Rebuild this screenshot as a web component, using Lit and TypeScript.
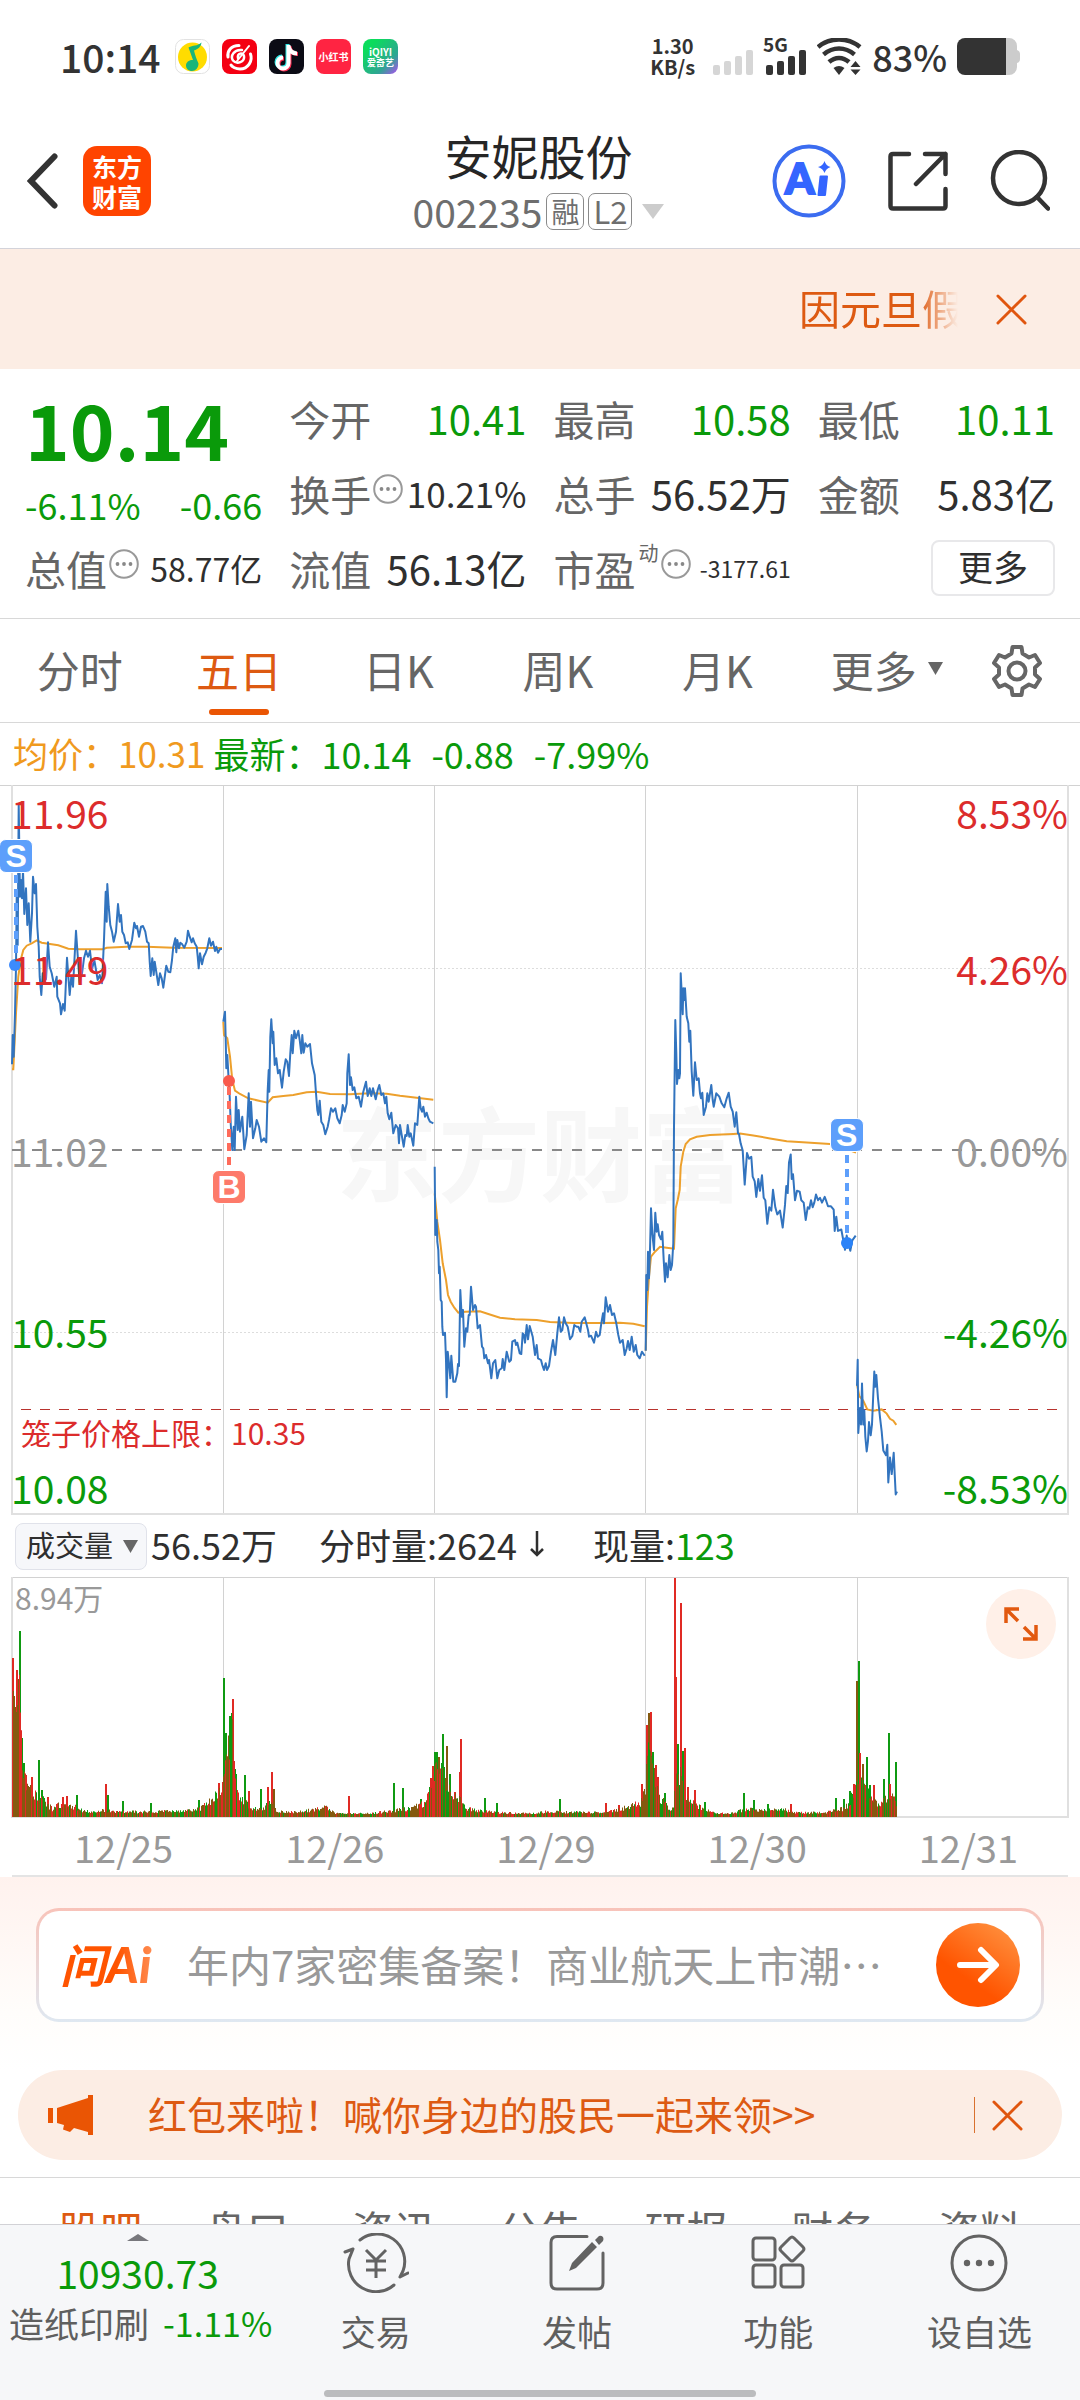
import { LitElement, html, svg, css } from "lit";
import { customElement, state } from "lit/decorators.js";
import { classMap } from "lit/directives/class-map.js";

type Trace = { ox: number; oy: number; sy: number; pts: string };

/* Intraday traces: three horizontal samples per chart unit, sy vertical samples per unit. */
const PRICE: Trace[][] = [
  [{ ox: 0, oy: -5, sy: 3, pts: "36,853 38,765 41,830 45,700 48,560 50,350 53,495 56,75 60,350 63,300 66,355 69,270 73,402 78,325 82,435 86,370 91,485 96,400 99,290 104,340 108,312 112,440 116,500 119,590 124,645 128,580 132,600 138,598 144,487 149,560 155,580 163,620 170,590 172,650 180,670 183,703 189,672 194,692 198,600 201,533 209,645 214,590 219,620 228,452 234,540 239,610 246,580 252,535 258,512 264,530 270,512 276,567 283,540 288,570 293,600 299,585 306,610 312,480 317,335 320,425 322,312 326,380 331,435 336,455 341,485 348,455 354,372 359,425 363,405 367,455 372,465 377,490 383,487 388,507 396,480 403,428 408,445 411,438 417,470 423,440 429,438 436,455 441,485 446,490 449,545 452,588 457,535 461,585 464,545 471,590 475,615 480,580 485,595 490,623 495,585 499,557 505,575 511,577 516,540 520,500 526,475 529,517 532,480 537,505 541,488 546,492 553,503 560,485 564,452 569,470 575,487 579,475 584,490 590,500 593,530 596,565 600,520 606,553 611,530 617,518 622,505 628,475 633,497 639,485 645,513 649,500 654,518 660,507 666,507" }],
  [{ ox: 0, oy: -5, sy: 3, pts: "670,725 675,695 677,780 679,865 682,825 685,880 689,950 692,1030 697,1110 701,1040 704,1110 708,950 713,1050 716,990 720,1055 727,1010 733,1108 740,1065 746,940 750,1040 753,965 759,1075 766,1045 770,1020 777,1040 784,1085 792,1075 799,1087 803,930 806,870 808,935 811,770 814,718 818,790 820,755 824,855 829,835 834,880 839,870 846,923 851,875 857,838 862,845 867,888 871,820 875,765 878,820 883,752 888,775 895,752 899,780 904,820 907,765 911,818 916,790 922,800 930,792 936,850 944,885 948,940 952,990 955,1005 959,962 964,1025 970,1035 976,1063 983,1040 987,1020 993,985 999,995 1006,985 1012,1015 1019,1030 1025,1005 1028,975 1034,995 1040,970 1042,880 1046,823 1050,915 1053,892 1058,930 1063,922 1069,955 1076,950 1083,980 1090,935 1098,905 1103,948 1109,925 1114,948 1119,925 1127,958 1133,930 1138,915 1144,945 1150,940 1155,970 1159,950 1163,1000 1168,1018 1174,998 1180,1060 1187,1035 1194,1045 1197,1090 1200,1035 1205,1065 1211,1100 1216,1065 1220,1068 1223,1035 1228,1070 1232,1060 1240,1097 1245,1030 1252,1035 1258,950 1262,985 1266,995 1270,980 1275,1010 1280,998 1285,1015 1290,1025 1300,1030" }],
  [{ ox: 400, oy: 175, sy: 3, pts: "104,620 106,825 110,780 112,845 115,870 117,940 119,920 122,1020 125,1025 127,1100 129,1125 135,1118 138,1200 140,1312 143,1175 147,1210 151,1255 154,1187 160,1265 166,1265 172,1240 174,1212 177,1218 181,990 185,1070 189,1050 193,1160 198,1105 202,1115 206,1065 209,1065 213,980 219,1050 225,1035 228,1040 233,1105 240,1095 246,1160 250,1165 253,1195 258,1185 264,1210 267,1200 271,1230 274,1255 279,1210 286,1200 292,1255 298,1230 305,1225 308,1197 313,1230 320,1175 328,1205 333,1200 337,1145 345,1140 348,1155 352,1148 359,1180 364,1182 368,1120 372,1125 375,1148 380,1095 384,1138 389,1098 398,1130 405,1185 410,1155 414,1195 423,1200 427,1215 432,1230 437,1210 441,1230 447,1218 453,1175 459,1140 466,1185 472,1120 477,1072 482,1115 487,1110 492,1072 497,1090 503,1100 510,1138 517,1128 523,1095 530,1100 535,1100 541,1115 545,1085 554,1072 560,1095 564,1110 567,1130 573,1127 582,1148 588,1115 593,1130 599,1125 604,1090 609,1060 612,1090 617,1012 624,1055 630,1035 636,1065 642,1060 649,1090 655,1125 660,1148 668,1140 674,1185 680,1165 684,1143 689,1170 695,1130 701,1175 707,1155 712,1185 719,1195 726,1175 734,1187" }],
  [
    { ox: 400, oy: 175, sy: 3, pts: "737,1172 739,945 742,990 744,875 747,955 750,870 753,745 757,820 762,870 766,758 770,815 773,793 777,825 783,838 787,815 791,900 795,965 798,910 803,952 808,885 812,930 816,915 820,850 822,500 826,180 829,280 831,372 835,330 838,355 840,340 842,40 845,100 848,163 850,85 853,120 855,85 860,170 865,190 868,245 871,212 875,335 880,407 885,307 890,360 896,355 900,400 903,415 907,398 911,465 918,440 922,400 926,425 934,375 938,420 941,440 949,400 958,410 965,430 973,442 980,415 986,398 992,440 998,455 1004,500 1009,457 1014,520" },
    { ox: 630, oy: -5, sy: 2.118, pts: "327,750 332,770 338,785 344,857 351,790 357,802 364,798 368,840 374,850 379,883 385,845 390,870 396,837 401,885 406,890 412,940 418,905 424,912 429,868 436,905 442,920 450,912 458,948 465,900 469,860 473,875 477,810 482,793 485,845 489,835 495,890 501,870 509,872 514,890 521,895 527,932 533,905 538,908 543,890 548,905 553,895 558,878 564,890 570,885 576,895 584,883 589,892 594,903 603,903 611,910 614,955 619,925 624,955 634,952 640,975 645,995 650,965 655,980 661,997 667,975 677,965" },
  ],
  [{ ox: 630, oy: -5, sy: 2.118, pts: "681,1283 683,1228 685,1383 690,1330 693,1365 696,1278 700,1365 703,1335 706,1390 710,1422 714,1400 717,1360 722,1388 726,1365 730,1300 733,1253 736,1285 739,1260 744,1310 750,1350 755,1380 760,1420 768,1430 772,1408 775,1488 780,1435 785,1470 791,1425 794,1470 797,1513 801,1507" }],
];

const AVERAGE: Trace[][] = [
  [{ ox: 0, oy: -5, sy: 3, pts: "36,868 40,868 48,700 55,590 62,540 70,510 80,497 95,490 110,481 125,488 150,492 175,496 205,506 240,508 308,508 320,503 380,500 440,500 520,503 666,504" }],
  [{ ox: 0, oy: -5, sy: 3, pts: "670,725 672,765 682,775 690,830 697,900 705,932 720,942 745,955 780,963 803,968 818,952 850,948 880,945 920,937 950,935 990,942 1050,943 1110,940 1160,941 1200,947 1250,953 1300,959" }],
  [{ ox: 400, oy: 175, sy: 3, pts: "104,700 112,785 120,840 128,910 138,960 144,1005 152,1025 163,1043 175,1058 195,1055 240,1054 265,1062 300,1073 345,1078 410,1080 450,1086 520,1089 600,1089 660,1088 700,1091 734,1099" }],
  [
    { ox: 400, oy: 175, sy: 3, pts: "737,1172 741,1040 747,950 753,890 765,875 780,860 800,863 822,866 827,745 833,720 839,690 842,620 850,575 857,552 870,538 890,530 930,525 1000,522" },
    { ox: 630, oy: -5, sy: 2.118, pts: "330,749 370,753 420,759 470,765 530,768 600,771 650,782 678,789" },
  ],
  [{ ox: 630, oy: -5, sy: 2.118, pts: "681,1280 688,1305 700,1315 712,1333 730,1336 755,1333 770,1342 780,1353 790,1357 799,1366" }],
];

const plot = (parts: Trace[]) =>
  parts
    .flatMap((t) =>
      t.pts.split(" ").map((p) => {
        const [x, y] = p.split(",").map(Number);
        return `${(t.ox + x / 3).toFixed(1)},${(t.oy + y / t.sy).toFixed(1)}`;
      }),
    )
    .join(" ");

/* Typical bar height along the session, as [x, height] knots. */
const VOLUME_BASE: number[][] = [
  [12, 130], [15, 110], [18, 140], [20, 130], [22, 72], [26, 42], [32, 28], [40, 26], [46, 16], [52, 9], [60, 15], [74, 12], [80, 8], [90, 6], [105, 8], [115, 6], [150, 6],
  [185, 7], [200, 10], [210, 18], [222, 34], [225, 55], [228, 75], [232, 98], [235, 44], [240, 22], [250, 11], [262, 8], [270, 20], [276, 6], [300, 6], [325, 11], [335, 4],
  [370, 4], [390, 7], [410, 10], [425, 16], [431, 34], [434, 58], [441, 58], [446, 42], [452, 24], [458, 22], [465, 10], [480, 7], [500, 5], [530, 4], [545, 6], [600, 5], [620, 9],
  [640, 16], [645, 30], [647, 75], [652, 60], [658, 25], [664, 18], [668, 8], [673, 10], [675, 42], [682, 50], [686, 22], [695, 14], [705, 9], [715, 4], [730, 4], [745, 9],
  [765, 8], [785, 8], [795, 5], [825, 5], [835, 8], [845, 10], [850, 20], [856, 33], [859, 58], [862, 45], [868, 28], [875, 16], [880, 12], [885, 22], [895, 22], [897, 8],
];
const SPIKES: [number, number, string][] = [
  [12, 159, "r"], [13, 121, "m"], [16, 147, "r"], [17, 138, "m"], [19, 186, "g"], [21, 79, "g"], [23, 54, "g"], [25, 42, "r"], [31, 40, "r"], [38, 57, "g"], [41, 27, "g"], [47, 20, "r"],
  [62, 20, "r"], [66, 21, "r"], [76, 22, "g"], [105, 33, "r"], [107, 22, "g"], [122, 16, "g"], [150, 14, "g"], [198, 17, "g"], [218, 34, "r"], [223, 139, "g"], [225, 84, "g"],
  [229, 101, "g"], [231, 104, "g"], [232, 118, "r"], [234, 48, "g"], [244, 42, "g"], [248, 26, "r"], [260, 28, "g"], [267, 30, "r"], [271, 45, "r"], [273, 28, "m"], [348, 21, "r"],
  [393, 34, "g"], [402, 29, "g"], [420, 18, "g"], [430, 39, "r"], [432, 51, "r"], [434, 65, "g"], [436, 65, "g"], [438, 60, "m"], [442, 83, "g"], [446, 71, "m"], [449, 43, "g"],
  [454, 25, "r"], [459, 45, "r"], [460, 78, "r"], [484, 19, "g"], [496, 14, "g"], [559, 18, "g"], [605, 14, "r"], [618, 12, "r"], [641, 33, "r"], [646, 92, "r"], [648, 104, "m"],
  [650, 105, "r"], [652, 65, "g"], [655, 52, "r"], [657, 40, "r"], [664, 24, "g"], [674, 239, "r"], [675, 140, "r"], [677, 73, "g"], [680, 214, "r"], [682, 66, "g"], [684, 69, "r"],
  [687, 30, "r"], [694, 27, "r"], [704, 15, "g"], [743, 24, "g"], [753, 17, "g"], [767, 13, "g"], [790, 13, "r"], [835, 19, "g"], [843, 18, "g"], [849, 26, "g"], [853, 33, "r"],
  [856, 136, "m"], [858, 156, "g"], [859, 64, "r"], [862, 53, "m"], [866, 60, "g"], [869, 32, "g"], [873, 32, "r"], [883, 38, "g"], [888, 84, "g"], [889, 33, "r"], [895, 55, "g"],
];

const volumeBars = () => {
  const paths: Record<string, string> = { r: "", g: "", m: "" };
  let seed = 17;
  const rnd = () => (seed = (seed * 16807) % 2147483647) / 2147483647;
  let k = 0;
  for (let x = 12; x < 897; x++) {
    while (VOLUME_BASE[k + 1][0] <= x && k < VOLUME_BASE.length - 2) k++;
    const [x0, h0] = VOLUME_BASE[k];
    const [x1, h1] = VOLUME_BASE[k + 1];
    const base = h0 + ((h1 - h0) * (x - x0)) / (x1 - x0);
    const h = Math.max(3, base * (0.6 + 0.5 * rnd()));
    const c = "rgmm"[Math.floor(rnd() * 4)];
    paths[c] += `M${x} 240h1v-${h.toFixed(1)}h-1z`;
  }
  let spikes = "";
  for (const [x, h, c] of SPIKES) {
    if (c === "m") spikes += `M${x} 240h2v-${h}h-2z`;
    else paths[c] += `M${x} 240h2v-${h}h-2z`;
  }
  return svg`<path class="vol-mix" d=${spikes}></path><path class="vol-down" d=${paths.g}></path><path class="vol-up" d=${paths.r}></path><path class="vol-mix" d=${paths.m}></path>`;
};

const more = html`<svg class="dots" viewBox="0 0 30 30" aria-hidden="true">
  <circle cx="15" cy="15" r="13.8" fill="none" stroke="#999" stroke-width="2"></circle>
  <g fill="#888"><circle cx="8.5" cy="15" r="1.9"></circle><circle cx="15" cy="15" r="1.9"></circle><circle cx="21.5" cy="15" r="1.9"></circle></g>
</svg>`;

const cross = html`<svg class="cross" viewBox="0 0 32 32" aria-hidden="true">
  <path d="M2 2L30 30M30 2L2 30" stroke="#e0560f" stroke-width="3" stroke-linecap="round"></path>
</svg>`;

@customElement("app-root")
export class AppRoot extends LitElement {
  @state() private period = "五日";

  static styles = css`
    :host { display: flex; flex-direction: column; height: 100vh; background: #fff; color: #2f2f2f; font-family: "Noto Sans CJK SC", "Noto Sans", sans-serif; overflow: hidden; }
    * { box-sizing: border-box; }
    svg { display: block; flex: none; }
    button, select, input { font: inherit; color: inherit; background: none; border: 0; padding: 0; margin: 0; border-radius: 0; cursor: pointer; }
    a { color: inherit; text-decoration: none; }
    .green { color: #0a9a0a; }
    .red { color: #dc2c2c; }
    .grey { color: #999; }

    .status { flex: none; display: flex; align-items: center; justify-content: space-between; height: 112px; padding: 0 60px; color: #333; }
    .status-side { display: flex; align-items: center; gap: 12px; }
    .status-right { gap: 10px; }
    .clock { font-size: 39px; line-height: 40px; font-weight: 500; margin-right: 2px; }
    .rate { font-size: 20px; line-height: 21px; font-weight: 700; text-align: center; margin-right: 8px; }
    .battery-text { font-size: 36px; line-height: 40px; font-weight: 500; }

    .header { flex: none; display: grid; grid-template-columns: 1fr auto 1fr; align-items: center; height: 137px; padding: 2px 30px 0 27px; border-bottom: 1px solid #d3d3da; }
    .header-side { display: flex; align-items: center; gap: 24px; }
    .header-right { justify-content: flex-end; gap: 42px; }
    .logo { display: grid; place-content: center; width: 68px; height: 70px; border-radius: 14px; background: #ff4400; color: #fff; font-weight: 700; font-size: 25px; line-height: 30px; text-align: center; }
    .title { display: flex; flex-direction: column; align-items: center; }
    .name { margin: 0; font-size: 47px; line-height: 60px; font-weight: 400; color: #262626; }
    .code { display: flex; align-items: center; gap: 4px; font-size: 39px; line-height: 52px; color: #6e6e6e; }
    .tag { display: grid; place-content: center; height: 37px; padding: 0 4px; border: 1px solid #8a8a8a; border-radius: 7px; font-size: 28px; line-height: 32px; }
    .tag-level { font-size: 31px; }
    .code-arrow { margin-left: 6px; }

    .notice { flex: none; display: flex; align-items: center; justify-content: flex-end; gap: 38px; height: 120px; padding: 0 53px 0 28px; background: #fcede4; color: #dd5a12; }
    .notice-text { width: 159px; overflow: hidden; white-space: nowrap; padding-bottom: 4px; font-size: 41px; line-height: 56px; -webkit-mask-image: linear-gradient(90deg, #000 75%, transparent 100%); mask-image: linear-gradient(90deg, #000 75%, transparent 100%); }
    .cross { width: 31px; height: 31px; }

    main { flex: 1; min-height: 0; overflow: hidden; }
    .quote { display: grid; grid-template-columns: repeat(4, minmax(0, 1fr)); grid-auto-rows: 75px; column-gap: 27px; height: 250px; padding: 11px 25px; border-bottom: 1px solid #d8d8d8; }
    .headline { grid-row: span 2; display: flex; flex-direction: column; }
    .last { font-size: 76px; line-height: 96px; font-weight: 700; }
    .change { display: flex; justify-content: space-between; font-size: 36px; line-height: 56px; }
    .cell { display: flex; align-items: center; justify-content: space-between; line-height: 60px; white-space: nowrap; }
    .label { display: flex; align-items: center; font-size: 41px; color: #666; }
    .dots { width: 30px; height: 30px; margin: 0 0 8px 2px; }
    .sup { font-size: 20px; line-height: 22px; margin: 0 0 30px 3px; }
    .v40 { font-size: 40px; }
    .v35 { font-size: 35px; }
    .v32 { font-size: 32px; }
    .v24 { font-size: 23px; }
    .more-button { margin-left: auto; width: 124px; height: 56px; padding-bottom: 4px; border: 2px solid #e8e8ea; border-radius: 8px; font-size: 35px; line-height: 48px; }

    .periods { display: grid; grid-template-columns: repeat(5, 160fr) 180fr 82fr; height: 104px; padding-right: 22px; border-bottom: 1px solid #d8d8d8; color: #666; font-size: 43px; }
    .period { display: flex; flex-direction: column; align-items: center; line-height: 60px; padding-top: 20px; gap: 10px; }
    .period::after { content: ""; width: 60px; height: 6px; border-radius: 3px; }
    .period.active { color: #dd5a12; }
    .period.active::after { background: #ea5504; }
    .period-more { display: flex; align-items: center; justify-content: center; gap: 11px; padding-bottom: 4px; }
    .gear { display: grid; place-items: center; }

    .legend { display: flex; align-items: center; gap: 20px; height: 62px; padding: 0 13px 2px; font-size: 36px; line-height: 60px; white-space: nowrap; }
    .average { color: #f09a1e; margin-right: -12px; font-size: 35px; }

    .chart { position: relative; }
    .chart svg.plot { width: 100%; height: 730px; }
    .chart svg.volume { width: 100%; height: 242px; }
    .plot *, .volume * { vector-effect: non-scaling-stroke; }
    .grid { fill: none; stroke: #d2d2d2; stroke-width: 1; }
    .frame { fill: none; stroke: #e0e0e0; stroke-width: 2; }
    .half { fill: none; stroke: #ddd; stroke-width: 1; stroke-dasharray: 2 2; }
    .zero { fill: none; stroke: #888; stroke-width: 2; stroke-dasharray: 10 10; }
    .cage { fill: none; stroke: #b8332e; stroke-width: 1; stroke-dasharray: 10 9; }
    .avg { fill: none; stroke: #eda02c; stroke-width: 2; }
    .price { fill: none; stroke: #3274bf; stroke-width: 2; stroke-linejoin: round; }
    .vol-up { fill: #e02a24; }
    .vol-down { fill: #0f9a12; }
    .vol-mix { fill: #84590f; }
    .watermark { position: absolute; left: 50%; top: 313px; transform: translateX(-50%); font-size: 102px; line-height: 104px; font-weight: 700; color: #f7f7f7; white-space: nowrap; }
    .plot, .volume { position: relative; }
    .axis { position: absolute; font-size: 39px; line-height: 40px; }
    .axis-left { left: 11px; }
    .axis-right { right: 12px; }
    .cage-label { position: absolute; left: 21px; top: 630px; font-size: 30px; line-height: 34px; }
    .mark { position: absolute; width: 34px; height: 34px; transform: translate(-50%, -50%); border: 1px solid #fff; border-radius: 7px; color: #fff; font-size: 32px; line-height: 32px; font-weight: 700; text-align: center; font-family: "Liberation Sans", sans-serif; }
    .sell { background: #5d9ffb; }
    .buy { background: #fd7a6a; }

    .volume-bar { display: flex; align-items: center; height: 62px; padding-left: 15px; font-size: 36px; line-height: 56px; white-space: nowrap; }
    .volume-bar > span { padding-bottom: 4px; }
    .volume-bar > .picker { position: relative; display: flex; align-items: center; width: 132px; height: 47px; padding: 0; border: 1px solid #e0e2ea; border-radius: 8px; background: #f6f7fa; margin-right: 4px; }
    .picker select { appearance: none; width: 100%; height: 45px; padding: 0 0 4px 10px; font-size: 29px; line-height: 40px; }
    .picker svg { position: absolute; right: 8px; pointer-events: none; }
    .minute { margin: 0 46px 0 42px; display: flex; align-items: center; }
    .peak { position: absolute; left: 15px; top: 3px; font-size: 30px; line-height: 34px; }
    .expand { position: absolute; right: 24px; top: 12px; width: 70px; height: 70px; border-radius: 50%; background: #fff0e8; display: grid; place-items: center; }
    .dates { display: grid; grid-template-columns: repeat(5, 1fr); height: 56px; padding: 0 6px 0 18px; font-size: 38px; line-height: 56px; text-align: center; color: #999; }
    .rule { height: 2px; margin: 0 12px; background: #e4e4e4; }

    .ask { height: 193px; padding: 31px 36px; background: linear-gradient(#fff2ee, #fffdfb 70%, #fff); }
    .ask-box { display: flex; align-items: center; height: 114px; padding: 0 21px; border: 3px solid transparent; border-radius: 23px; background: linear-gradient(#fff, #fff) padding-box, linear-gradient(#f8c3b9, #dfe8f1) border-box; }
    .ask-logo { display: flex; align-items: baseline; width: 127px; font-size: 46px; line-height: 56px; font-weight: 700; font-style: italic; white-space: nowrap; color: transparent; background: linear-gradient(90deg, #ff5400 45%, #ff9a66 80%); background-clip: text; -webkit-background-clip: text; padding-bottom: 4px; }
    .ask-latin { font-family: Lato, "Liberation Sans", sans-serif; font-weight: 900; font-size: 50px; }
    .ask-input { flex: 1; min-width: 0; height: 60px; padding-bottom: 4px; font-size: 42px; outline: 0; }
    .ask-input::placeholder { color: #999; opacity: 1; }
    .go { width: 84px; height: 84px; border-radius: 50%; background: linear-gradient(35deg, #ff5400 35%, #ff8e3c 90%); display: grid; place-items: center; }

    .promo { display: flex; align-items: center; height: 90px; margin: 0 18px 17px; padding: 0 39px 0 30px; border-radius: 45px; background: #fcede4; color: #dd5a12; font-size: 39px; line-height: 60px; white-space: nowrap; }
    .promo a { flex: 1; margin-left: 54px; padding-bottom: 5px; }
    .promo-close { display: flex; align-items: center; padding-left: 17px; border-left: 1px solid #d9712f; height: 36px; }

    .sections { display: grid; grid-template-columns: repeat(7, 1fr); border-top: 1px solid #d8d8d8; padding: 21px 27px; font-size: 42px; line-height: 60px; font-weight: 400; text-align: center; color: #666; }
    .sections .current { color: #dd5a12; }

    .dock { position: relative; flex: none; display: grid; grid-template-columns: 275fr repeat(4, 201fr); height: 176px; border-top: 1px solid #d2d2d6; background: #f6f7f9; color: #5f5f5f; }
    .index { display: flex; flex-direction: column; align-items: center; padding-top: 9px; }
    .index-value { font-size: 39px; line-height: 48px; margin-top: 7px; }
    .index-name { display: flex; gap: 14px; font-size: 35px; line-height: 54px; white-space: nowrap; padding-left: 6px; }
    .index-pct { font-size: 34px; }
    .action { display: flex; flex-direction: column; align-items: center; gap: 16px; padding-top: 8px; font-size: 35px; line-height: 44px; }
    .action svg { width: 66px; height: 60px; fill: none; stroke: #636363; stroke-width: 3; stroke-linecap: round; stroke-linejoin: round; }
    .home { position: absolute; left: 30%; right: 30%; bottom: 3px; height: 7px; border-radius: 4px; background: #bbbcbe; }
  `;

  private statusBar() {
    return html`<div class="status">
      <div class="status-side">
        <span class="clock">10:14</span>
        <svg width="35" height="35" viewBox="0 0 35 35" role="img" aria-label="QQ音乐">
          <rect x=".5" y=".5" width="34" height="34" rx="8" fill="#fff" stroke="#e2e2e2"></rect>
          <circle cx="17.5" cy="18" r="14.5" fill="#ffdc00"></circle>
          <path d="M13.500 8.500C18 6 22 7.500 26.500 3.500C26 8 23 10 19 11.500C20 16 21.500 20 23.500 24.500C23.500 29 20.500 32 17 32C13.500 32 11 29.500 11 26.500C11 23 14.500 20.500 18 21z" fill="#18b57a"></path>
        </svg>
        <svg width="35" height="35" viewBox="0 0 35 35" role="img" aria-label="网易云音乐">
          <rect width="35" height="35" rx="8" fill="#f40012"></rect>
          <g fill="none" stroke="#fff" stroke-width="3" stroke-linecap="round">
            <path d="M17 6.500C9 6.500 5 12 6 18M28.500 15C31 22 26 30 18 30C14 30 10 28 9 26"></path>
            <path d="M20 11C12 10 8 17 11 21.500C15 26 23 23 22 17C21 13 15 14 16 19" stroke-width="2.500"></path>
            <path d="M27 7L15 22" stroke-width="2"></path>
          </g>
        </svg>
        <svg width="35" height="35" viewBox="0 0 35 35" role="img" aria-label="抖音">
          <rect width="35" height="35" rx="8" fill="#0b0b15"></rect>
          <g fill="none" stroke-width="4">
            <path d="M18.500 5V23A5.500 5.500 0 1 1 13 17.500M18.500 7C19.500 12 23 14 27 14" stroke="#2ee8e4"></path>
            <path d="M20.500 7V25A5.500 5.500 0 1 1 15 19.500M20.500 8C21.500 13 25 15 29 15" stroke="#fa2d52"></path>
            <path d="M19.500 6V24A5.500 5.500 0 1 1 14 18.500M19.500 7C20.500 12 24 14.500 28 14.500" stroke="#fff"></path>
          </g>
        </svg>
        <svg width="35" height="35" viewBox="0 0 35 35">
          <rect width="35" height="35" rx="8" fill="#ff2442"></rect>
          <text x="17.500" y="21.500" font-size="10" font-weight="700" fill="#fff" text-anchor="middle">小红书</text>
        </svg>
        <svg width="35" height="35" viewBox="0 0 35 35">
          <defs><linearGradient id="iq" x1="0" y1="0" x2="1" y2="1"><stop offset=".2" stop-color="#0bdc5c"></stop><stop offset=".7" stop-color="#2fa593"></stop><stop offset="1" stop-color="#b04cf4"></stop></linearGradient></defs>
          <rect width="35" height="35" rx="8" fill="url(#iq)"></rect>
          <text x="17.500" y="16.500" font-size="10" font-weight="700" fill="#fff" text-anchor="middle">iQIYI</text>
          <text x="17.500" y="27" font-size="9" font-weight="700" fill="#fff" text-anchor="middle">爱奇艺</text>
        </svg>
      </div>
      <div class="status-side status-right">
        <span class="rate">1.30<br />KB/s</span>
        <svg width="40" height="37" viewBox="0 0 40 37" fill="#d6d6d6" aria-hidden="true">
          <rect x="0" y="27" width="7" height="10" rx="2"></rect><rect x="11" y="23" width="7" height="14" rx="2"></rect><rect x="22" y="18" width="7" height="19" rx="2"></rect><rect x="33" y="12" width="7" height="25" rx="2"></rect>
        </svg>
        <svg width="44" height="37" viewBox="0 0 44 37" fill="#333">
          <text x="0" y="14" font-size="19" font-weight="700">5G</text>
          <rect x="3" y="27" width="7" height="10" rx="2"></rect><rect x="14" y="23" width="7" height="14" rx="2"></rect><rect x="25" y="18" width="7" height="19" rx="2"></rect><rect x="36" y="12" width="7" height="25" rx="2"></rect>
        </svg>
        <svg width="45" height="37" viewBox="0 0 45 37" fill="none" stroke="#333" stroke-width="4.500" aria-hidden="true">
          <path d="M1 9C13-1 31-1 43 9M6.500 16.500C16 8.500 28 8.500 37.500 16.500M12 24C18 18.500 26 18.500 32 24"></path>
          <path d="M16.500 30Q22 26 27.500 30L22 37z" fill="#333" stroke="none"></path>
          <path d="M33.500 29L38.500 23L43.500 29zM33.500 31.500L38.500 37L43.500 31.500z" fill="#333" stroke="none"></path>
        </svg>
        <span class="battery-text">83%</span>
        <svg width="63" height="37" viewBox="0 0 63 37" aria-hidden="true">
          <path d="M48 0h4a8 8 0 0 1 8 8v4q3 1 3 4v5q0 3-3 4v4a8 8 0 0 1-8 8h-4z" fill="#ccc"></path>
          <path d="M8 0H49V37H8A8 8 0 0 1 0 29V8A8 8 0 0 1 8 0z" fill="#333"></path>
        </svg>
      </div>
    </div>`;
  }

  private header() {
    return html`<header class="header">
      <div class="header-side">
        <button aria-label="返回">
          <svg width="32" height="58" viewBox="0 0 32 58"><path d="M27.500 4.500L4 29L27.500 53.500" fill="none" stroke="#333" stroke-width="6" stroke-linecap="round"></path></svg>
        </button>
        <span class="logo">东方<br />财富</span>
      </div>
      <div class="title">
        <h1 class="name">安妮股份</h1>
        <div class="code">
          002235<span class="tag">融</span><span class="tag tag-level">L2</span>
          <svg class="code-arrow" width="22" height="15" viewBox="0 0 22 15"><path d="M0 0H22L11 15z" fill="#ccc"></path></svg>
        </div>
      </div>
      <div class="header-side header-right">
        <button aria-label="Ai">
          <svg width="74" height="74" viewBox="0 0 74 74">
            <circle cx="37" cy="37" r="34.500" fill="none" stroke="#3b6cf0" stroke-width="4"></circle>
            <text x="13" y="50" font-family="Lato, Liberation Sans, sans-serif" font-size="42" font-weight="900" fill="#3465ff" stroke="#3465ff" stroke-width="2">A</text>
            <path fill="#3465ff" stroke="#3465ff" stroke-width="2" stroke-linejoin="round" d="M48.500 32.500H55L53 51H46.500z"></path>
            <path fill="#3465ff" d="M52.500 17Q54 22 58.500 23Q54 24.500 52.500 29Q51 24.500 46 23Q51 22 52.500 17z"></path>
          </svg>
        </button>
        <button aria-label="分享">
          <svg width="60" height="62" viewBox="0 0 60 62" fill="none" stroke="#333" stroke-width="4.500" stroke-linecap="round" stroke-linejoin="round">
            <path d="M21 4H5Q2.500 4 2.500 6.500V56Q2.500 58.500 5 58.500H55Q57.500 58.500 57.500 56V39"></path><path d="M37 4H57.500V24M57.500 4L28 34"></path>
          </svg>
        </button>
        <button aria-label="搜索">
          <svg width="60" height="62" viewBox="0 0 60 62" fill="none" stroke="#333" stroke-width="4.500" stroke-linecap="round"><circle cx="29" cy="28" r="26"></circle><path d="M47 47L58 58.500"></path></svg>
        </button>
      </div>
    </header>`;
  }

  private quote() {
    const cell = (label: unknown, value: string, cls: string) =>
      html`<div class="cell"><span class="label">${label}</span><span class=${cls}>${value}</span></div>`;
    return html`<section class="quote">
      <div class="headline green">
        <span class="last">10.14</span>
        <span class="change"><span>-6.11%</span><span>-0.66</span></span>
      </div>
      ${cell("今开", "10.41", "v40 green")} ${cell("最高", "10.58", "v40 green")} ${cell("最低", "10.11", "v40 green")}
      ${cell(html`换手${more}`, "10.21%", "v35")} ${cell("总手", "56.52万", "v40")} ${cell("金额", "5.83亿", "v40")}
      ${cell(html`总值${more}`, "58.77亿", "v32")} ${cell("流值", "56.13亿", "v40")}
      ${cell(html`市盈<span class="sup">动</span>${more}`, "-3177.61", "v24")}
      <div class="cell"><button class="more-button">更多</button></div>
    </section>`;
  }

  private periods() {
    return html`<nav class="periods">
      ${["分时", "五日", "日K", "周K", "月K"].map(
        (p) => html`<button class=${classMap({ period: true, active: p === this.period })} @click=${() => (this.period = p)}>${p}</button>`,
      )}
      <button class="period-more">更多<svg width="15" height="13" viewBox="0 0 15 13"><path d="M0 0H15L7.500 13z" fill="#666"></path></svg></button>
      <button class="gear" aria-label="设置">
        <svg width="54" height="54" viewBox="0 0 54 54" fill="none" stroke="#666" stroke-width="4" stroke-linejoin="round">
          <path d="M22.500 3H31.500L32.500 9.500L39 13.500L45 11L50 19L45 23.500V30.500L50 35L45 43L39 40.500L32.500 44.500L31.500 51H22.500L21.500 44.500L15 40.500L9 43L4 35L9 30.500V23.500L4 19L9 11L15 13.500L21.500 9.500z"></path>
          <circle cx="27" cy="27" r="8.500"></circle>
        </svg>
      </button>
    </nav>`;
  }

  private priceChart() {
    const rows: [number, string, string, string][] = [
      [7, "11.96", "8.53%", "red"], [163, "11.49", "4.26%", "red"], [345, "11.02", "0.00%", "grey"], [526, "10.55", "-4.26%", "green"], [682, "10.08", "-8.53%", "green"],
    ];
    const labels = rows.map(
      ([top, left, right, tone]) => html`<span class="axis axis-left ${tone}" style="top:${top}px">${left}</span><span class="axis axis-right ${tone}" style="top:${top}px">${right}</span>`,
    );
    return html`<section class="chart">
      <span class="watermark" aria-hidden="true">东方财富</span>
      <svg class="plot" viewBox="0 0 1080 730" preserveAspectRatio="none" role="img" aria-label="五日走势">
        <path class="grid" d="M0 .5H1080M223.500 0V729M434.500 0V729M645.500 0V729M857.500 0V729"></path>
        <path class="frame" d="M12 0V729H1068V0"></path>
        <path class="half" d="M12 183.500H1068M12 547.500H1068"></path>
        <path class="zero" d="M12 365H1058"></path>
        <path class="cage" d="M21 624.500H1058"></path>
        ${AVERAGE.map((d) => svg`<polyline class="avg" points=${plot(d)}></polyline>`)}
        ${PRICE.map((d) => svg`<polyline class="price" points=${plot(d)}></polyline>`)}
        <g fill="none" stroke-width="4" stroke-dasharray="8 6"><path d="M16 90V176M847 370V456" stroke="#5d9ffb"></path><path d="M229 302V385" stroke="#ff6b5a"></path></g>
        <circle cx="15" cy="180" r="6" fill="#3d8bfd"></circle><circle cx="847" cy="458" r="6" fill="#2b83f8"></circle><circle cx="229" cy="296" r="6" fill="#f95a4c"></circle>
      </svg>
      ${labels}
      <span class="cage-label red">笼子价格上限：10.35</span>
      <span class="mark sell" style="left:1.5%;top:71px">S</span>
      <span class="mark buy" style="left:21.2%;top:402px">B</span>
      <span class="mark sell" style="left:78.4%;top:350px">S</span>
    </section>`;
  }

  private volumeChart() {
    return html`<div class="volume-bar">
        <span class="picker">
          <select aria-label="指标"><option>成交量</option></select>
          <svg width="15" height="13" viewBox="0 0 15 13"><path d="M0 0H15L7.500 13z" fill="#666"></path></svg>
        </span>
        <span>56.52万</span>
        <span class="minute">分时量:2624
          <svg width="30" height="30" viewBox="0 0 30 30" aria-label="下降"><path d="M20 2V26M14 20L20 26L26 20" fill="none" stroke="#2f2f2f" stroke-width="2.500"></path></svg>
        </span>
        <span>现量:<span class="green">123</span></span>
      </div>
      <section class="chart">
        <svg class="volume" viewBox="0 0 1080 242" preserveAspectRatio="none" role="img" aria-label="成交量">
          <path class="grid" d="M12 .5H1068M223.500 0V240M434.500 0V240M645.500 0V240M857.500 0V240"></path>
          <path class="frame" d="M12 0V240H1068V0"></path>
          ${volumeBars()}
        </svg>
        <span class="peak grey">8.94万</span>
        <button class="expand" aria-label="全屏">
          <svg width="36" height="36" viewBox="0 0 36 36" fill="none" stroke="#e2590f" stroke-width="3.500"><path d="M16 3H3V17M3 3L15 15M20 33H33V19M33 33L21 21"></path></svg>
        </button>
      </section>
      <div class="dates">${["12/25", "12/26", "12/29", "12/30", "12/31"].map((d) => html`<span>${d}</span>`)}</div>
      <div class="rule"></div>`;
  }

  private feed() {
    return html`<section class="ask">
        <form class="ask-box" @submit=${(e: Event) => e.preventDefault()}>
          <label class="ask-logo" for="ask-input">问<span class="ask-latin">Ai</span></label>
          <input id="ask-input" class="ask-input" type="text" placeholder="年内7家密集备案！商业航天上市潮…" />
          <button class="go" aria-label="提问">
            <svg width="44" height="40" viewBox="0 0 44 40" fill="none" stroke="#fff" stroke-width="6" stroke-linecap="round" stroke-linejoin="round"><path d="M4 20H39M25 5L40 20L25 35"></path></svg>
          </button>
        </form>
      </section>
      <div class="promo">
        <svg width="46" height="40" viewBox="0 0 46 40" fill="#ea5504" aria-hidden="true"><path d="M0 13H5V28H0zM9 13L40 3V0H45V40H40V37L26 33L22 37L15 34.500L16 30L9 28z"></path></svg>
        <a href="#promo">红包来啦！喊你身边的股民一起来领&gt;&gt;</a>
        <button class="promo-close" aria-label="关闭">${cross}</button>
      </div>
      <nav class="sections">
        ${["股吧", "盘口", "资讯", "公告", "研报", "财务", "资料"].map((s, i) => html`<a href="#section-${i}" class=${i === 0 ? "current" : ""}>${s}</a>`)}
      </nav>`;
  }

  private dock() {
    return html`<footer class="dock">
      <div class="index">
        <svg width="22" height="7" viewBox="0 0 22 7"><path d="M0 7L11 0L22 7z" fill="#77777c"></path></svg>
        <span class="index-value green">10930.73</span>
        <span class="index-name">造纸印刷<span class="index-pct green">-1.11%</span></span>
      </div>
      <button class="action">
        <svg viewBox="0 0 66 60"><path d="M17 7A27.500 27.500 0 0 1 60 38L57 44L65 40M51 52A27.500 27.500 0 0 1 6 26L10 16L2 19"></path><path d="M23 17L33 27L43 17M23 28H43M23 37H43M33 27V45" stroke-linecap="butt"></path></svg>交易
      </button>
      <button class="action">
        <svg viewBox="0 0 66 60"><path d="M43 3.500H13Q7 3.500 7 9.500V50Q7 56 13 56H53Q59 56 59 50V20"></path><path d="M25 38L28 30L48 9L53 14L32 35zM51 7L55 3Q57 2 59 4Q60 6 59 8L55 12z" fill="#636363" stroke="none"></path></svg>发帖
      </button>
      <button class="action">
        <svg viewBox="0 0 66 60"><rect x="8" y="5" width="22" height="22" rx="3"></rect><rect x="8" y="32" width="22" height="22" rx="3"></rect><rect x="36" y="32" width="22" height="22" rx="3"></rect><path d="M45 5Q47 3 49 5L58 14Q60 16 58 18L49 27Q47 29 45 27L36 18Q34 16 36 14z"></path></svg>功能
      </button>
      <button class="action">
        <svg viewBox="0 0 66 60"><circle cx="33" cy="30" r="27"></circle><g fill="#636363" stroke="none"><circle cx="21" cy="30" r="3.200"></circle><circle cx="33" cy="30" r="3.200"></circle><circle cx="45" cy="30" r="3.200"></circle></g></svg>设自选
      </button>
      <span class="home"></span>
    </footer>`;
  }

  render() {
    return html`${this.statusBar()} ${this.header()}
      <div class="notice"><span class="notice-text">因元旦假期</span><button aria-label="关闭公告">${cross}</button></div>
      <main>
        ${this.quote()} ${this.periods()}
        <div class="legend">
          <span class="average">均价：10.31</span><span class="green">最新：10.14</span><span class="green">-0.88</span><span class="green">-7.99%</span>
        </div>
        ${this.priceChart()} ${this.volumeChart()} ${this.feed()}
      </main>
      ${this.dock()}`;
  }
}
